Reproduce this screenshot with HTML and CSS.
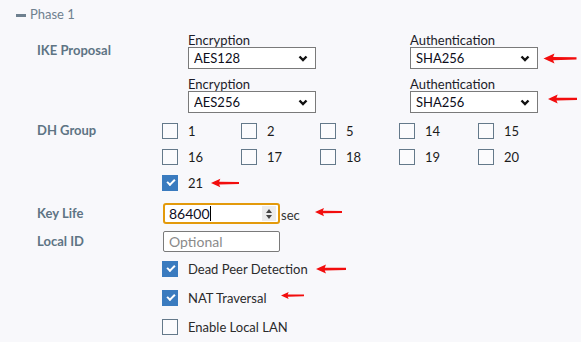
FILE: index.html
```html
<!DOCTYPE html>
<html lang="en">
<head>
    <meta charset="UTF-8">
    <meta name="viewport" content="width=device-width, initial-scale=1.0">
    <title>Phase 1</title>
    <link rel="stylesheet" href="styles.css">
</head>
<body>
    <div class="section">
        <div class="section-head">
            <span class="minus"></span>
            <span>Phase 1</span>
        </div>

        <div class="form">
            <!-- IKE proposal -->
            <div class="row row-top">
                <div class="label label-ike">IKE Proposal</div>
                <div class="proposals">
                    <div class="pick">
                        <div class="pick-title">Encryption</div>
                        <select class="select"><option>AES128</option></select>
                    </div>
                    <div class="pick">
                        <div class="pick-title">Authentication</div>
                        <div class="with-arrow">
                            <select class="select"><option>SHA256</option></select>
                            <svg class="arrow arrow-a1" viewBox="0 0 36 12"><path d="M0 6 L12 0.5 L10.5 4.4 L36 4.6 L36 7.2 L10.5 7.8 L12 11.5 Z"/></svg>
                        </div>
                    </div>
                    <div class="pick">
                        <div class="pick-title">Encryption</div>
                        <select class="select"><option>AES256</option></select>
                    </div>
                    <div class="pick">
                        <div class="pick-title">Authentication</div>
                        <div class="with-arrow">
                            <select class="select"><option>SHA256</option></select>
                            <svg class="arrow arrow-a2" viewBox="0 0 36 12"><path d="M0 6 L12 0.5 L10.5 4.4 L36 4.6 L36 7.2 L10.5 7.8 L12 11.5 Z"/></svg>
                        </div>
                    </div>
                </div>
            </div>

            <!-- DH group -->
            <div class="row row-top">
                <div class="label label-dh">DH Group</div>
                <div class="dh-grid">
                    <label class="check"><span class="box"></span>1</label>
                    <label class="check"><span class="box"></span>2</label>
                    <label class="check"><span class="box"></span>5</label>
                    <label class="check"><span class="box"></span>14</label>
                    <label class="check"><span class="box"></span>15</label>
                    <label class="check"><span class="box"></span>16</label>
                    <label class="check"><span class="box"></span>17</label>
                    <label class="check"><span class="box"></span>18</label>
                    <label class="check"><span class="box"></span>19</label>
                    <label class="check"><span class="box"></span>20</label>
                    <label class="check check-wide"><span class="box checked"></span>21
                        <svg class="arrow arrow-21" viewBox="0 0 36 12"><path d="M0 6 L12 0.5 L10.5 4.4 L36 4.6 L36 7.2 L10.5 7.8 L12 11.5 Z"/></svg>
                    </label>
                </div>
            </div>

            <!-- key life -->
            <div class="row row-keylife">
                <div class="label">Key Life</div>
                <div class="field">
                    <div class="num-input">
                        <span class="num-value">86400</span><span class="caret"></span>
                        <span class="spin">
                            <svg viewBox="0 0 8 12"><path d="M4 1 L7 5 L1 5 Z M4 11 L7 7 L1 7 Z"/></svg>
                        </span>
                    </div>
                    <span class="unit">sec</span>
                    <svg class="arrow arrow-key" viewBox="0 0 36 12"><path d="M0 6 L12 0.5 L10.5 4.4 L36 4.6 L36 7.2 L10.5 7.8 L12 11.5 Z"/></svg>
                </div>
            </div>

            <!-- local id -->
            <div class="row row-localid">
                <div class="label">Local ID</div>
                <div class="field">
                    <input class="text-input" type="text" placeholder="Optional">
                </div>
            </div>

            <div class="row row-opt">
                <div></div>
                <label class="check check-opt"><span class="box checked"></span>Dead Peer Detection
                    <svg class="arrow arrow-dpd" viewBox="0 0 36 12"><path d="M0 6 L12 0.5 L10.5 4.4 L36 4.6 L36 7.2 L10.5 7.8 L12 11.5 Z"/></svg>
                </label>
            </div>
            <div class="row row-opt">
                <div></div>
                <label class="check check-opt"><span class="box checked"></span>NAT Traversal
                    <svg class="arrow arrow-nat" viewBox="0 0 36 12"><path d="M0 6 L12 0.5 L10.5 4.4 L36 4.6 L36 7.2 L10.5 7.8 L12 11.5 Z"/></svg>
                </label>
            </div>
            <div class="row row-opt">
                <div></div>
                <label class="check check-opt"><span class="box"></span>Enable Local LAN</label>
            </div>
        </div>
    </div>
</body>
</html>
```

FILE: styles.css
```css
* {
    margin: 0;
    padding: 0;
    box-sizing: border-box;
}

body {
    font-family: Lato, "Noto Sans", sans-serif;
    font-size: 13px;
    line-height: 13px;
    background: #f8f8fb;
    color: #1c1c1c;
    padding: 8px 0 0 16px;
}

.section-head {
    display: flex;
    align-items: center;
    color: #6e808f;
    height: 13px;
}

.minus {
    width: 10px;
    height: 3px;
    background: #6e808f;
    margin-right: 4px;
    margin-top: 1px;
}

.form {
    padding-left: 21px;
    margin-top: 12px;
}

.row {
    display: grid;
    grid-template-columns: 125px auto;
    align-items: center;
}

.row-top {
    align-items: start;
}

.label {
    font-weight: 700;
    color: #5e7484;
}

.label-ike {
    padding-top: 11px;
}

.label-dh {
    padding-top: 11px;
}

/* proposal selects */
.proposals {
    display: grid;
    grid-template-columns: 222px auto;
    row-gap: 8px;
    padding-left: 26px;
}

.pick-title {
    height: 14px;
    line-height: 14px;
    color: #1c1c2a;
}

.with-arrow {
    display: flex;
    align-items: center;
}

.select {
    appearance: none;
    -webkit-appearance: none;
    display: block;
    width: 128px;
    height: 22px;
    border: 1px solid #7a7a7a;
    border-radius: 0;
    background-color: #fff;
    background-image: url("data:image/svg+xml,%3Csvg xmlns='http://www.w3.org/2000/svg' width='10' height='7' viewBox='0 0 10 7'%3E%3Cpath d='M1.5 1.5 L5 5 L8.5 1.5' fill='none' stroke='%23111' stroke-width='2.4'/%3E%3C/svg%3E");
    background-repeat: no-repeat;
    background-position: right 7px center;
    font-family: Lato, "Noto Sans", sans-serif;
    font-size: 13px;
    color: #0d0d1a;
    padding-left: 5px;
}

.arrow {
    fill: #f20d0d;
    flex: none;
}

.arrow-a1 {
    width: 36px;
    height: 11px;
    margin-left: 4px;
}

.arrow-a2 {
    width: 29px;
    height: 10px;
    margin-left: 10px;
    margin-top: -6px;
}

/* dh group checkboxes */
.dh-grid {
    display: grid;
    grid-template-columns: repeat(5, 79px);
    row-gap: 10px;
    margin-top: 10px;
}

.check {
    display: flex;
    align-items: center;
    height: 16px;
    color: #1c1c1c;
}

.check-wide {
    grid-column: 1 / span 3;
}

.box {
    width: 16px;
    height: 16px;
    border: 1.5px solid #64798a;
    background: #fbfbfd;
    margin-right: 10px;
    flex: none;
    position: relative;
}

.box.checked {
    background: #3a7bbf;
    border-color: #3a7bbf;
}

.box.checked::after {
    content: "";
    position: absolute;
    left: 4px;
    top: 3px;
    width: 6px;
    height: 3px;
    border-left: 2px solid #fff;
    border-bottom: 2px solid #fff;
    transform: rotate(-45deg);
}

.arrow-21 {
    width: 28px;
    height: 10px;
    margin-left: 8px;
}

/* key life */
.row-keylife {
    margin-top: 12px;
}

.field {
    display: flex;
    align-items: center;
    padding-left: 1px;
}

.num-input {
    display: flex;
    align-items: center;
    width: 117px;
    height: 21px;
    border: 2px solid #e39a0b;
    border-radius: 3px;
    background: #fff;
    padding-left: 4px;
    padding-right: 2px;
    font-size: 14px;
    color: #0f0f1f;
}

.caret {
    width: 1px;
    height: 15px;
    background: #000;
}

.spin {
    margin-left: auto;
    width: 14px;
    height: 15px;
    background: #ececec;
    display: flex;
    align-items: center;
    justify-content: center;
}

.spin svg {
    width: 8px;
    height: 12px;
    fill: #444;
}

.unit {
    color: #333;
    margin-left: 1px;
    margin-top: 3px;
}

.arrow-key {
    width: 27px;
    height: 10px;
    margin-left: 15px;
    margin-top: -3px;
}

.row-localid {
    margin-top: 7px;
}

.text-input {
    width: 117px;
    height: 21px;
    border: 1px solid #7a7a7a;
    border-radius: 2px;
    background: #fff;
    padding-left: 5px;
    font-family: Lato, "Noto Sans", sans-serif;
    font-size: 14px;
}

.text-input::placeholder {
    color: #8a8a8a;
}

.row-opt {
    margin-top: 13px;
}

.row-localid + .row-opt {
    margin-top: 9px;
}

.check-opt {
    font-size: 13px;
    color: #2b2b2b;
}

.arrow-dpd {
    width: 30px;
    height: 10px;
    margin-left: 8px;
}

.arrow-nat {
    width: 23px;
    height: 9px;
    margin-left: 15px;
    margin-top: -6px;
}
```
